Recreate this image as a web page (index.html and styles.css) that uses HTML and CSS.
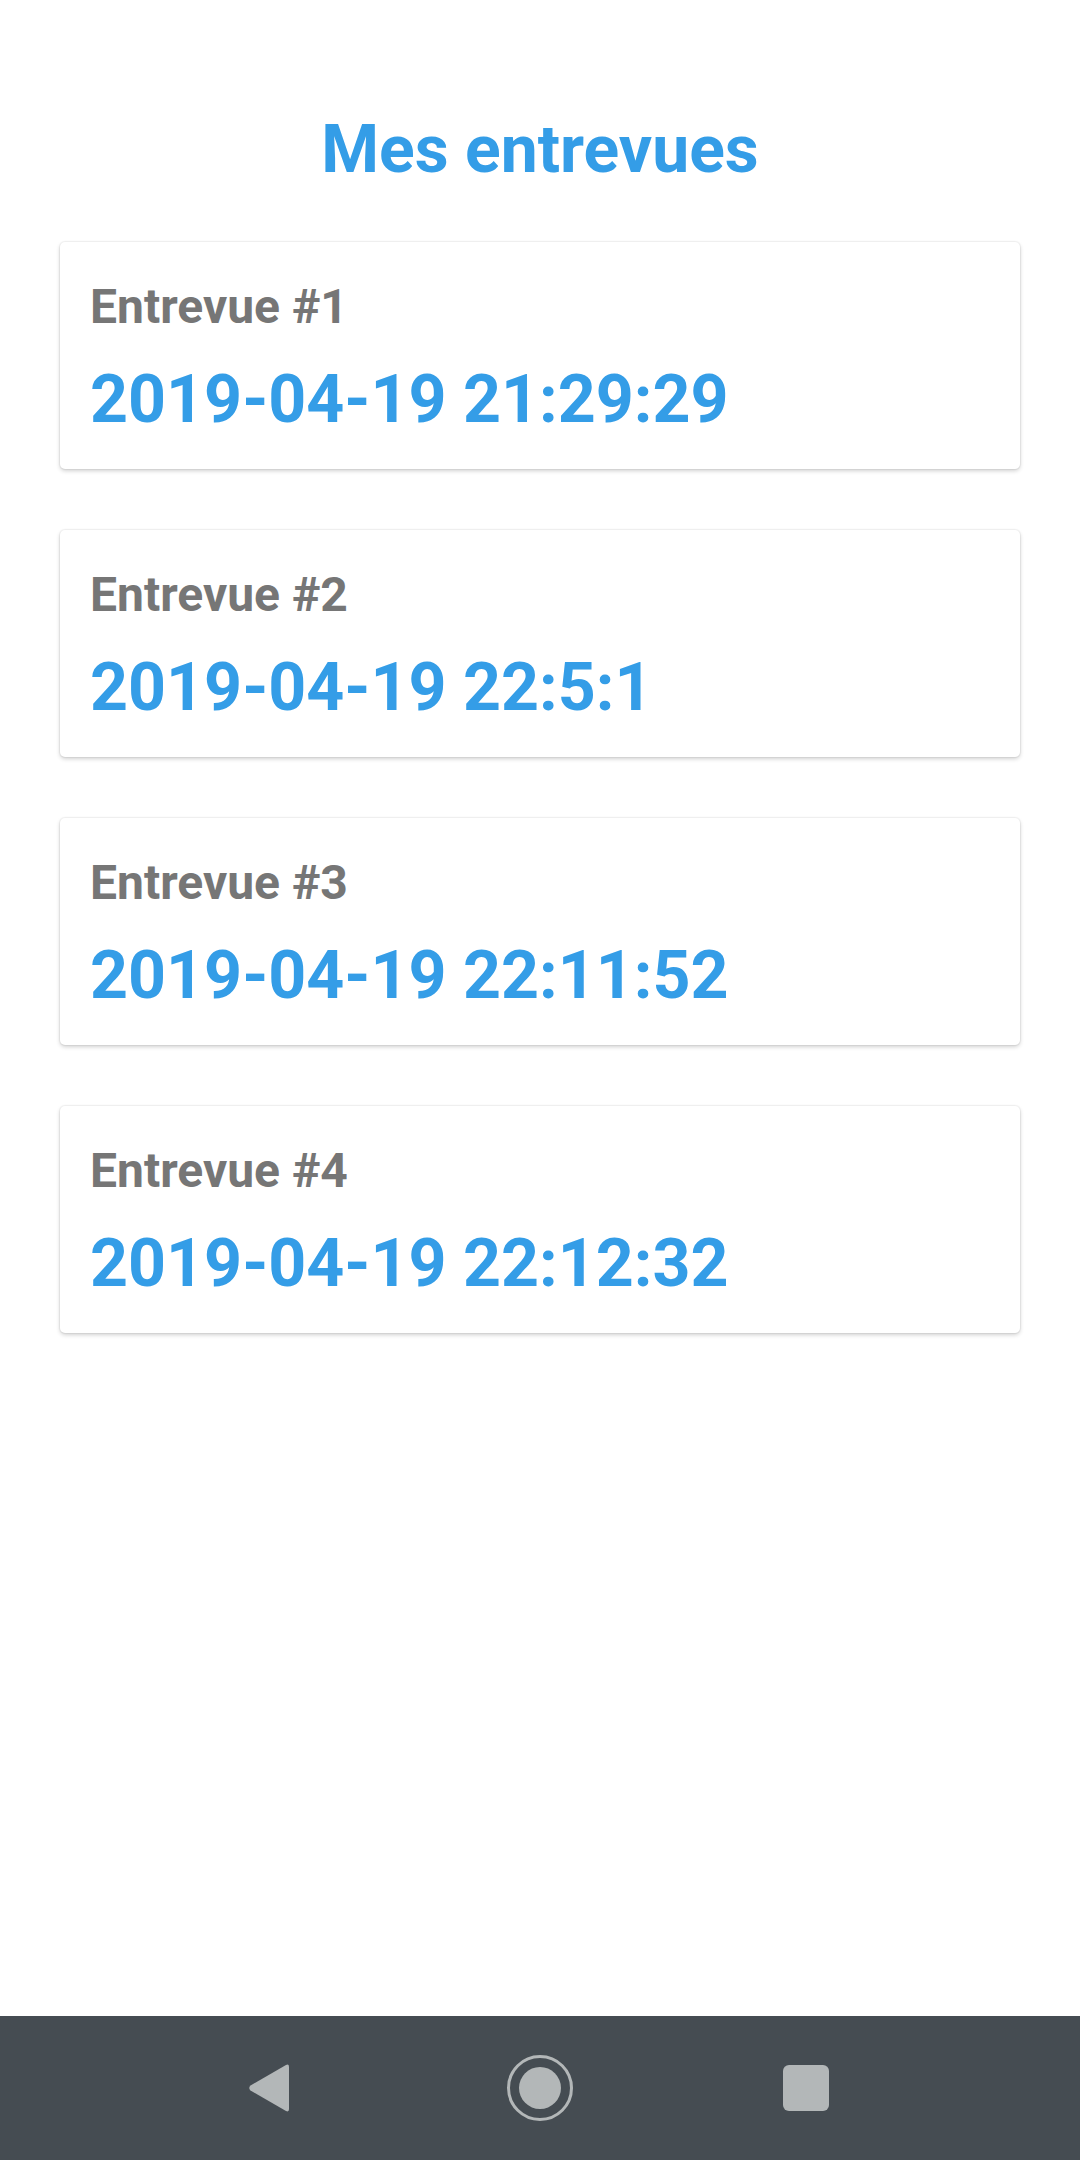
FILE: index.html
```html
<!DOCTYPE html>
<html lang="fr">
<head>
<meta charset="utf-8">
<title>Mes entrevues</title>
<link rel="stylesheet" href="styles.css">
</head>
<body>
<div class="screen">
  <main class="content">
    <h1 class="title">Mes entrevues</h1>
    <ul class="list">
      <li class="card">
        <div class="label">Entrevue #1</div>
        <div class="date">2019-04-19 21:29:29</div>
      </li>
      <li class="card">
        <div class="label">Entrevue #2</div>
        <div class="date">2019-04-19 22:5:1</div>
      </li>
      <li class="card">
        <div class="label">Entrevue #3</div>
        <div class="date">2019-04-19 22:11:52</div>
      </li>
      <li class="card">
        <div class="label">Entrevue #4</div>
        <div class="date">2019-04-19 22:12:32</div>
      </li>
    </ul>
  </main>
  <nav class="navbar">
    <div class="nav-slot">
      <svg class="icon-back" width="44" height="50" viewBox="0 0 44 50">
        <path d="M39 2 Q42 0.5 42 4 L42 46 Q42 49.5 39 48 L3.5 27.5 Q1 25 3.5 22.5 Z" fill="#b3b7b8"/>
      </svg>
    </div>
    <div class="nav-slot">
      <svg class="icon-home" width="68" height="68" viewBox="0 0 68 68">
        <circle cx="34" cy="34" r="31.5" fill="none" stroke="#b3b7b8" stroke-width="3"/>
        <circle cx="34" cy="34" r="21" fill="#b3b7b8"/>
      </svg>
    </div>
    <div class="nav-slot">
      <div class="icon-recent"></div>
    </div>
  </nav>
</div>
</body>
</html>
```

FILE: styles.css
```css
html, body {
  margin: 0;
  padding: 0;
  background: #ffffff;
}

.screen {
  width: 1080px;
  height: 2160px;
  display: flex;
  flex-direction: column;
  font-family: Roboto, "Noto Sans", "Liberation Sans", sans-serif;
}

.content {
  flex: 1;
  padding: 111px 60px 0;
}

.title {
  margin: 0;
  font-size: 66px;
  line-height: 77px;
  font-weight: 700;
  color: #349de7;
  text-align: center;
}

.list {
  list-style: none;
  margin: 54px 0 0;
  padding: 0;
  display: flex;
  flex-direction: column;
  gap: 61px;
}

.card {
  background: #ffffff;
  border-radius: 5px;
  box-shadow: 0 2px 4px rgba(0, 0, 0, 0.18), 0 0 1px 1px rgba(0, 0, 0, 0.05);
  padding: 36px 30px 30px;
  height: 227px;
  box-sizing: border-box;
}

.label {
  font-size: 48px;
  line-height: 57px;
  font-weight: 700;
  color: #767676;
}

.date {
  margin-top: 26px;
  font-size: 66.3px;
  line-height: 77px;
  font-weight: 700;
  color: #349de7;
}

.navbar {
  height: 144px;
  background: #454c52;
  display: flex;
  justify-content: center;
  align-items: center;
  gap: 166px;
}

.nav-slot {
  width: 100px;
  height: 100px;
  display: flex;
  align-items: center;
  justify-content: center;
}

.icon-back {
  margin-right: 10px;
}

.icon-recent {
  width: 46px;
  height: 46px;
  border-radius: 6px;
  background: #b3b7b8;
}
```
